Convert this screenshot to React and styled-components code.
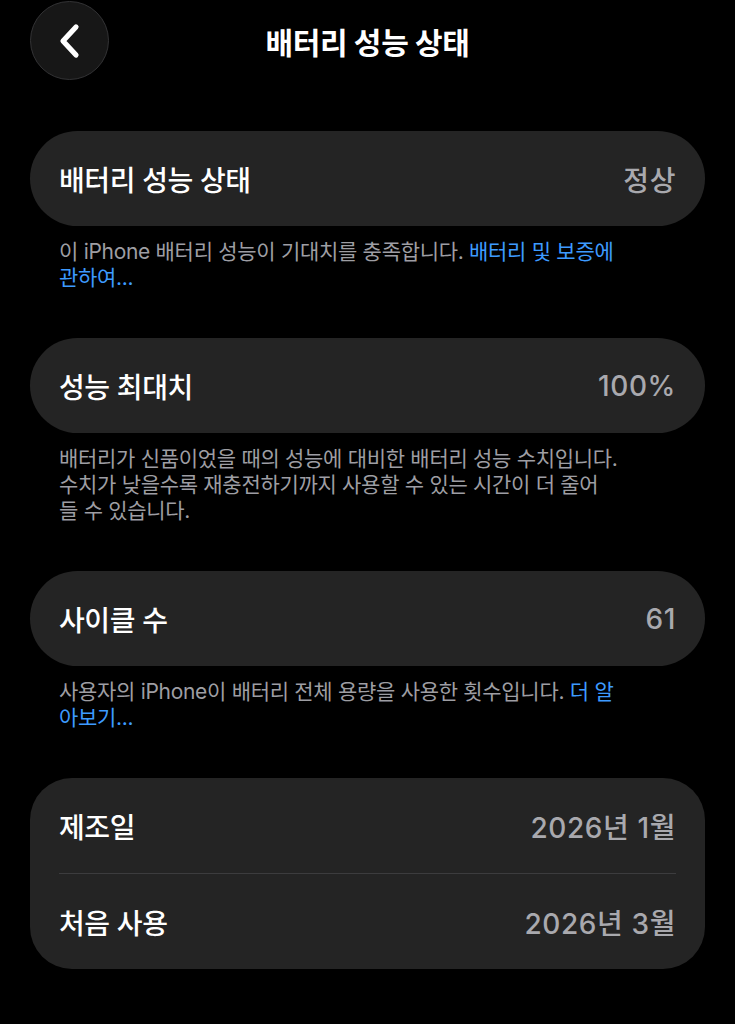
import styled, { createGlobalStyle } from "styled-components";

const GlobalStyle = createGlobalStyle`
  html, body {
    margin: 0;
    padding: 0;
    background: #000;
  }
  body {
    font-family: Inter, "Noto Sans CJK KR", sans-serif;
    -webkit-font-smoothing: antialiased;
  }
`;

const Page = styled.div`
  width: 735px;
  min-height: 1024px;
  background: #000;
  color: #fff;
  box-sizing: border-box;
  padding: 1px 30px 0;
`;

const Header = styled.header`
  position: relative;
  display: flex;
  align-items: center;
  justify-content: center;
  height: 79px;
`;

const BackButton = styled.button`
  position: absolute;
  left: 0;
  top: 0;
  width: 79px;
  height: 79px;
  border-radius: 50%;
  border: 1px solid #333335;
  background: #171717;
  display: flex;
  align-items: center;
  justify-content: center;
  padding: 0;
  cursor: pointer;
`;

const Title = styled.h1`
  margin: 0;
  font-size: 30px;
  font-weight: 700;
  letter-spacing: -0.3px;
  font-family: "Noto Sans CJK KR", sans-serif;
`;

const Content = styled.main`
  padding-top: 51px;
`;

const Card = styled.section`
  background: #242424;
  border-radius: ${(p) => (p.$group ? "42px" : "48px")};
  padding: 0 29px;
`;

const Row = styled.div`
  display: flex;
  align-items: center;
  justify-content: space-between;
  height: 95px;
  & + & {
    border-top: 1px solid #3c3c3e;
  }
`;

const Label = styled.span`
  font-size: 28px;
  font-weight: 500;
  color: #fff;
  letter-spacing: -0.4px;
`;

const Value = styled.span`
  font-size: 28px;
  font-weight: 500;
  color: #a9a9ae;
  letter-spacing: 0.6px;
`;

const Footnote = styled.p`
  margin: 13px 0 47px;
  padding: 0 0 0 29px;
  font-size: 21px;
  line-height: 26px;
  color: #9e9ea3;
  letter-spacing: -0.3px;
  white-space: nowrap;
`;

const Link = styled.a`
  color: #3d9bff;
  text-decoration: none;
`;

const Chevron = () => (
  <svg width="26" height="36" viewBox="0 0 26 36">
    <path
      d="M19 4 L6 18 L19 32"
      fill="none"
      stroke="#fff"
      strokeWidth="5.2"
      strokeLinecap="round"
      strokeLinejoin="round"
    />
  </svg>
);

const App = () => {
  return (
    <>
      <GlobalStyle />
      <Page>
        <Header>
          <BackButton aria-label="뒤로">
            <Chevron />
          </BackButton>
          <Title>배터리 성능 상태</Title>
        </Header>

        <Content>
          <Card>
            <Row>
              <Label>배터리 성능 상태</Label>
              <Value>정상</Value>
            </Row>
          </Card>
          <Footnote>
            이 iPhone 배터리 성능이 기대치를 충족합니다.{" "}
            <Link>배터리 및 보증에</Link>
            <br />
            <Link>관하여...</Link>
          </Footnote>

          <Card>
            <Row>
              <Label>성능 최대치</Label>
              <Value>100%</Value>
            </Row>
          </Card>
          <Footnote>
            배터리가 신품이었을 때의 성능에 대비한 배터리 성능 수치입니다.
            <br />
            수치가 낮을수록 재충전하기까지 사용할 수 있는 시간이 더 줄어
            <br />
            들 수 있습니다.
          </Footnote>

          <Card>
            <Row>
              <Label>사이클 수</Label>
              <Value>61</Value>
            </Row>
          </Card>
          <Footnote>
            사용자의 iPhone이 배터리 전체 용량을 사용한 횟수입니다.{" "}
            <Link>더 알</Link>
            <br />
            <Link>아보기...</Link>
          </Footnote>

          <Card $group>
            <Row>
              <Label>제조일</Label>
              <Value>2026년 1월</Value>
            </Row>
            <Row>
              <Label>처음 사용</Label>
              <Value>2026년 3월</Value>
            </Row>
          </Card>
        </Content>
      </Page>
    </>
  );
};

export default App;
